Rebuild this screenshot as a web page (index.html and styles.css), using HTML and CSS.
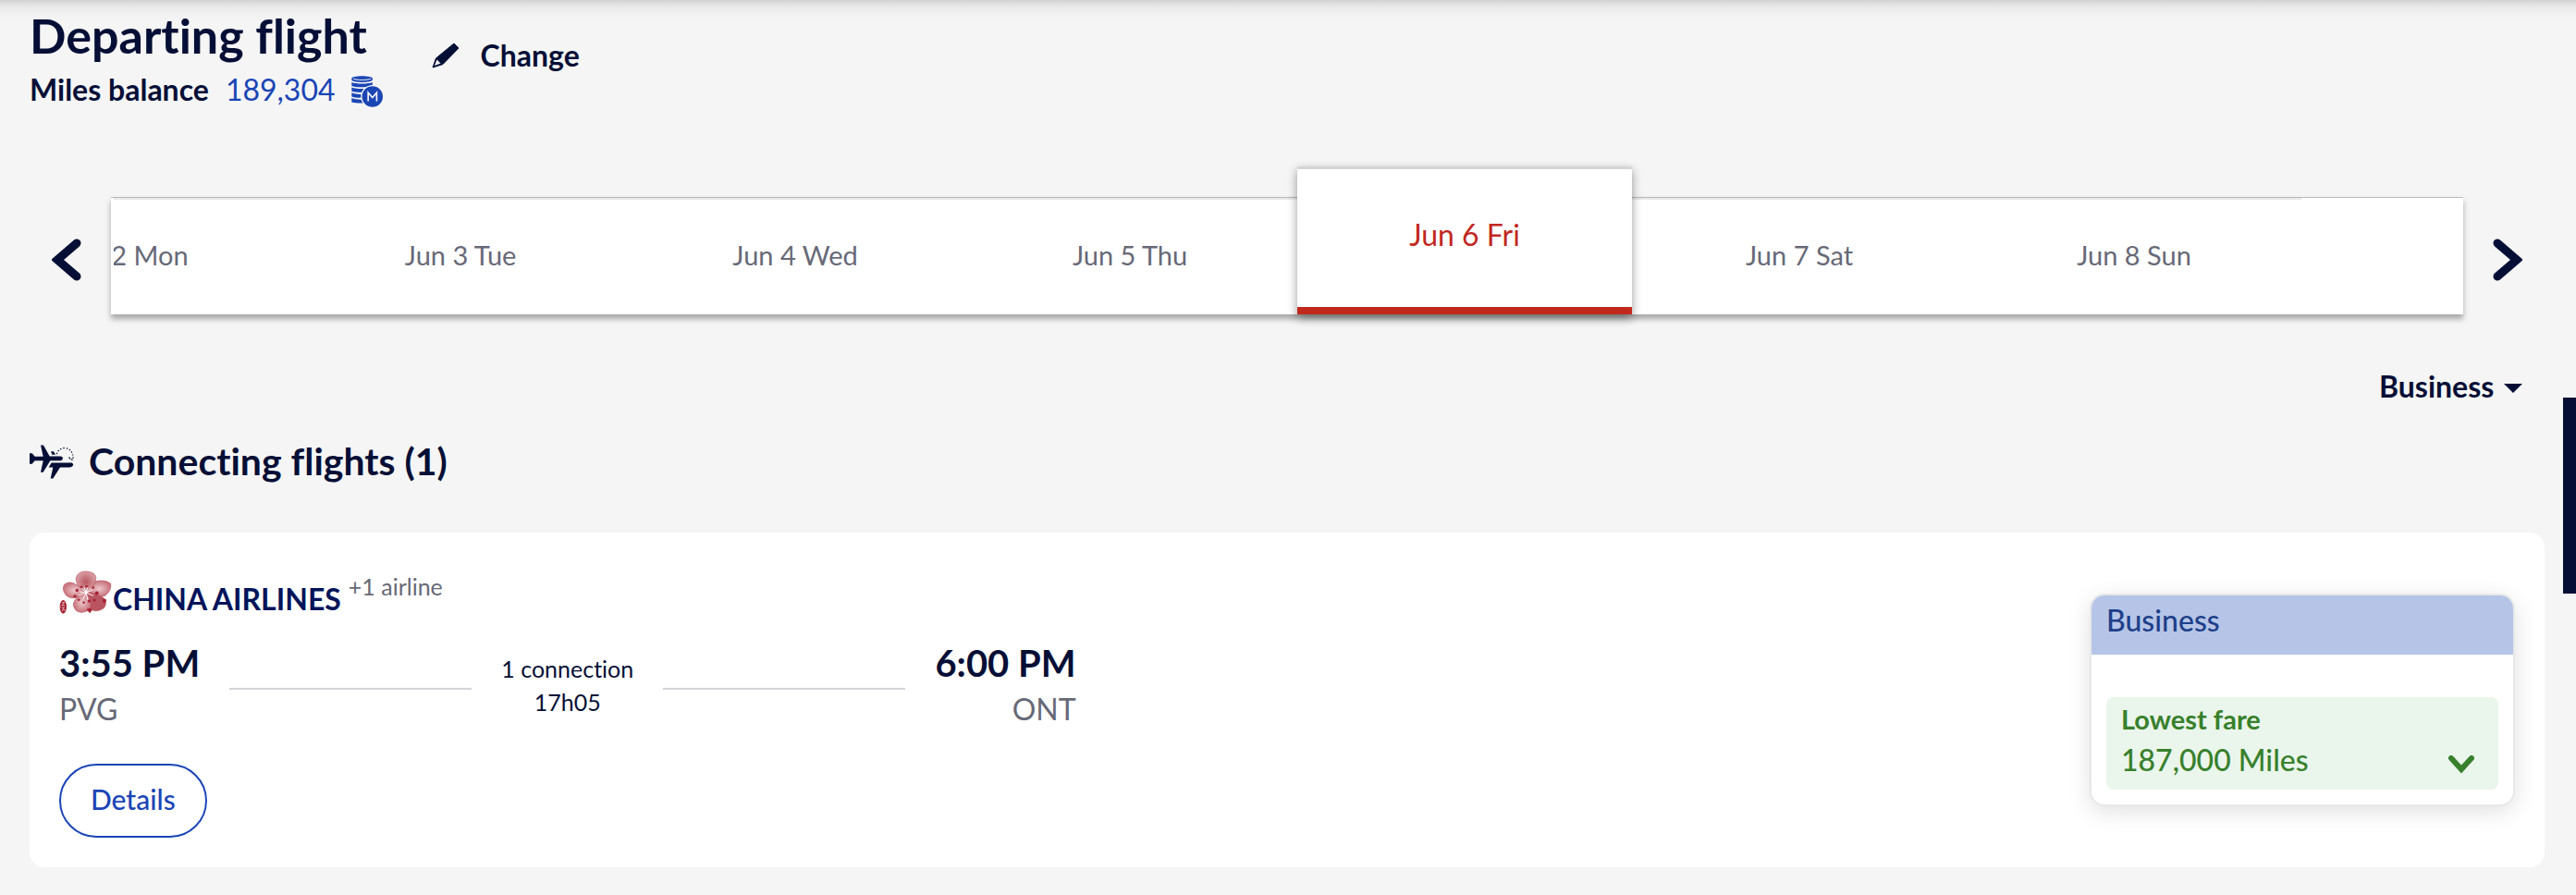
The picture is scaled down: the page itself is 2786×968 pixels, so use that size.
FILE: index.html
```html
<!DOCTYPE html>
<html lang="en">
<head>
<meta charset="utf-8">
<title>Departing flight</title>
<link rel="stylesheet" href="styles.css">
</head>
<body>
<main class="page">
  <header class="head">
    <div class="head-info">
      <h1 class="title">Departing flight</h1>
      <p class="balance">
        <strong class="balance-label">Miles balance</strong>
        <span class="balance-value">189,304</span>
        <svg class="coins" viewBox="56 42 106 104" aria-hidden="true">
          <g fill="#1a45b5">
            <path d="M57 49C57 45 72 42 91 42S125 45 125 49V55C125 59 110 62 91 62S57 59 57 55Z"/>
            <path d="M57 62C70 68 112 68 125 62V72C112 80 70 80 57 74Z"/>
            <path d="M57 79C70 85 106 85 125 79V89C112 96 70 98 57 91Z"/>
            <path d="M57 96C70 102 90 102 100 100V112C85 114 66 113 57 109Z"/>
            <path d="M57 114C70 120 90 120 100 118V130C85 131 66 130 57 127Z"/>
          </g>
          <path d="M62 50C72 56 110 56 120 50" fill="none" stroke="#f5f5f5" stroke-width="3"/>
          <circle cx="125" cy="109" r="36" fill="#1a45b5" stroke="#f5f5f5" stroke-width="4"/>
          <path d="M111 124V96L125 112L139 96V124" fill="none" stroke="#f5f5f5" stroke-width="5"/>
        </svg>
      </p>
    </div>
    <button class="change" type="button">
      <svg class="pencil" viewBox="0 0 30 28" aria-hidden="true">
        <path d="M24 1L29 6L12 23.500L1 27L4.500 17Z" fill="#050f36" stroke="#050f36" stroke-linejoin="round"/>
        <path d="M5.500 18.500L9.500 22.500L3 25Z" fill="#f5f5f5"/>
      </svg>
      Change
    </button>
  </header>

  <nav class="calendar" aria-label="Departure dates">
    <button class="arrow" type="button" aria-label="Previous dates">
      <svg class="arrow-icon" viewBox="0 0 32 46" aria-hidden="true"><path d="M27 5L6 23L27 41"/></svg>
    </button>
    <div class="strip">
      <div class="dates">
        <button class="date" type="button">Jun 2 Mon</button>
        <button class="date" type="button">Jun 3 Tue</button>
        <button class="date" type="button">Jun 4 Wed</button>
        <button class="date" type="button">Jun 5 Thu</button>
        <button class="date date-active" type="button" aria-current="date">Jun 6 Fri</button>
        <button class="date" type="button">Jun 7 Sat</button>
        <button class="date" type="button">Jun 8 Sun</button>
      </div>
    </div>
    <button class="arrow" type="button" aria-label="Next dates">
      <svg class="arrow-icon" viewBox="0 0 32 46" aria-hidden="true"><path d="M5 5L26 23L5 41"/></svg>
    </button>
  </nav>

  <div class="filter">
    <select class="cabin" aria-label="Cabin">
      <option>Business</option>
    </select>
    <svg class="caret" viewBox="0 0 20 10" aria-hidden="true"><path d="M0 0H20L10 10Z" fill="#050f36"/></svg>
  </div>

  <h2 class="subtitle">
    <svg class="planes" viewBox="36 32 144 110" aria-hidden="true">
      <g fill="#050f36">
        <path d="M36 59H44L53 70H80L72 33H81L101 69H137Q144 70 144 76T137 83H103L80 121H72L80 83H53L44 94H36Z"/>
        <path d="M107 90H172Q179 92 177 99Q174 104 167 105H135L112 141H104L112 105H98Z"/>
        <path d="M105 53H114L120 64H109Z"/>
      </g>
      <path d="M124 62Q130 43 150 42Q172 44 176 66" fill="none" stroke="#050f36" stroke-width="4" stroke-dasharray="4 6"/>
      <path d="M164 72Q168 80 175 79L178 71" fill="none" stroke="#050f36" stroke-width="4" stroke-dasharray="6 3"/>
    </svg>
    Connecting flights (1)
  </h2>

  <article class="flight">
    <section class="itinerary">
      <div class="airline">
        <svg class="plum" viewBox="41 49 170 142" aria-hidden="true">
          <defs>
            <radialGradient id="dark"><stop offset="0" stop-color="#b95862"/><stop offset="1" stop-color="#d99da3"/></radialGradient>
            <radialGradient id="light"><stop offset="0" stop-color="#ecc9cd"/><stop offset="1" stop-color="#c9727b"/></radialGradient>
          </defs>
          <g stroke="#b6525c" stroke-width="2">
            <path d="M128 121Q86 152 62 130Q46 108 58 94Q74 82 94 94Q114 102 128 121Z" fill="url(#light)"/>
            <path d="M132 120Q136 96 154 86Q188 76 208 92Q212 114 190 131Q162 144 132 120Z" fill="url(#light)"/>
            <path d="M128 121Q154 120 184 138Q200 154 186 172Q162 188 143 176Q126 152 128 121Z" fill="#b95560"/>
            <path d="M128 121Q94 132 86 158Q88 184 112 186Q142 184 144 164Q142 138 128 121Z" fill="url(#light)"/>
            <path d="M128 121Q92 98 95 74Q100 52 128 52Q158 54 160 72Q160 100 128 121Z" fill="url(#dark)"/>
          </g>
          <g stroke="#fff" stroke-width="3" stroke-linecap="round">
            <path d="M128 122L112 107M128 122L133 103M128 122L148 113M128 122L151 131M128 122L133 144M128 122L118 142M128 122L104 130M128 122L108 119M128 122L122 105M128 122L144 106"/>
          </g>
          <g fill="#a82233">
            <circle cx="113" cy="103" r="4"/><circle cx="130" cy="101" r="4"/><circle cx="151" cy="105" r="4"/><circle cx="98" cy="114" r="5"/>
            <circle cx="163" cy="123" r="6"/><circle cx="91" cy="133" r="5"/><circle cx="104" cy="145" r="4"/><circle cx="120" cy="154" r="4"/>
            <circle cx="138" cy="149" r="5"/><circle cx="155" cy="146" r="5"/>
            <path d="M184 140L195 145L190 156L181 151Z"/><path d="M129 176L140 171L148 178L140 189Z"/>
            <ellipse cx="53" cy="168" rx="11" ry="22"/>
          </g>
          <path d="M50 154L57 153L49 163H58M48 172L58 169M50 182L54 174L59 181M43 167H46" fill="none" stroke="#fff" stroke-width="2"/>
        </svg>
        <span class="airline-name">CHINA AIRLINES</span>
        <span class="airline-more">+1 airline</span>
      </div>
      <div class="journey">
        <div class="stop">
          <div class="time">3:55 PM</div>
          <div class="airport">PVG</div>
        </div>
        <div class="rule"></div>
        <div class="connection">1 connection<br>17h05</div>
        <div class="rule"></div>
        <div class="stop stop-end">
          <div class="time">6:00 PM</div>
          <div class="airport">ONT</div>
        </div>
      </div>
      <button class="details" type="button">Details</button>
    </section>
    <section class="fare">
      <h3 class="fare-head">Business</h3>
      <button class="fare-option" type="button">
        <span class="fare-text">
          <span class="fare-label">Lowest fare</span>
          <span class="fare-price">187,000 Miles</span>
        </span>
        <svg class="chevron" viewBox="0 0 28 20" aria-hidden="true"><path d="M3 3L14 15L25 3"/></svg>
      </button>
    </section>
  </article>
</main>
<button class="side-tab" type="button" aria-label="Feedback"></button>
</body>
</html>
```
FILE: styles.css
```css
* {
  box-sizing: border-box;
}

body {
  margin: 0;
  min-height: 100vh;
  background: linear-gradient(#d2d2d2, #e6e6e6 6px, #f1f1f1 14px, #f5f5f5 24px) #f5f5f5;
  color: #050f36;
  font-family: Lato, sans-serif;
  font-size: 32px;
  line-height: 40px;
  font-variant-ligatures: none;
}

button,
select {
  margin: 0;
  padding: 0;
  border: 0;
  background: none;
  color: inherit;
  font: inherit;
  font-variant-ligatures: none;
  cursor: pointer;
}

h1,
h2,
h3,
p {
  margin: 0;
}

svg {
  display: block;
  flex: none;
}

.page {
  padding: 12px 34px 30px 32px;
}

.head {
  display: flex;
  align-items: flex-start;
  gap: 52px;
}

.title {
  font-size: 52px;
  line-height: 52px;
  font-weight: 700;
}

.balance {
  display: flex;
  align-items: center;
  margin-top: 13px;
}

.balance-label {
  font-weight: 700;
}

.balance-value {
  margin: 0 17px 0 18px;
  color: #1a45b5;
}

.coins {
  width: 35px;
  height: 35px;
  margin-top: 5px;
}

.change {
  display: flex;
  align-items: center;
  gap: 23px;
  margin-top: 28px;
  font-weight: 700;
}

.pencil {
  width: 30px;
  height: 28px;
}

.calendar {
  display: flex;
  align-items: center;
  margin-top: 96px;
}

.arrow {
  flex: none;
  display: flex;
  justify-content: flex-end;
  width: 56px;
  margin: 8px 32px 0 0;
}

.strip + .arrow {
  justify-content: flex-start;
  margin: 8px 0 0 32px;
}

.arrow-icon {
  width: 32px;
  height: 46px;
  fill: none;
  stroke: #050f36;
  stroke-width: 9;
  stroke-linecap: round;
}

.strip {
  flex: 1;
  min-width: 0;
  padding: 0 175px 0 3px;
  border-top: 1px solid #bbb;
  background: #fff;
  box-shadow: 0 5px 6px rgba(0, 0, 0, 0.32);
}

.dates {
  display: flex;
  justify-content: flex-end;
  overflow-x: clip;
}

.date {
  flex: 0 0 15.3%;
  height: 126px;
  padding-bottom: 4px;
  border-top: 2px solid #e8e8e8;
  color: #676977;
  font-size: 29px;
}

.date-active {
  position: relative;
  height: 160px;
  margin-top: -34px;
  padding-bottom: 8px;
  border-top: 3px solid #d6d6d6;
  border-bottom: 8px solid #c1281e;
  background: #fff;
  box-shadow: 0 4px 10px rgba(0, 0, 0, 0.4);
  color: #c1281e;
  font-size: 32px;
}

.filter {
  display: flex;
  align-items: center;
  justify-content: flex-end;
  gap: 10px;
  margin-top: 58px;
  padding-right: 24px;
}

.cabin {
  appearance: none;
  font-weight: 700;
}

.caret {
  width: 20px;
  height: 10px;
  margin-top: 4px;
}

.subtitle {
  display: flex;
  align-items: center;
  gap: 16px;
  margin-top: 37px;
  font-size: 41px;
  line-height: 48px;
  font-weight: 700;
}

.planes {
  width: 48px;
  height: 37px;
}

.flight {
  display: flex;
  align-items: center;
  justify-content: space-between;
  margin-top: 53px;
  padding: 32px;
  border-radius: 16px;
  background: #fff;
}

.itinerary {
  width: 41.4%;
}

.airline {
  display: flex;
  align-items: flex-end;
  height: 56px;
}

.plum {
  width: 57px;
  height: 47px;
}

.airline-name {
  margin-left: 1px;
  color: #00145a;
  font-size: 32px;
  line-height: 32px;
  font-weight: 700;
}

.airline-more {
  align-self: center;
  margin: 0 0 4px 8px;
  color: #676977;
  font-size: 25px;
  line-height: 32px;
}

.journey {
  display: flex;
  align-items: center;
  gap: 32px;
  margin-top: 31px;
}

.time {
  font-size: 40px;
  line-height: 44px;
  font-weight: 700;
  white-space: nowrap;
}

.airport {
  margin-top: 8px;
  color: #676977;
}

.stop-end {
  text-align: right;
}

.rule {
  flex: 1;
  height: 2px;
  margin-top: 8px;
  background: #d3d3d8;
}

.connection {
  font-size: 25px;
  line-height: 36px;
  text-align: center;
}

.details {
  height: 80px;
  margin-top: 39px;
  padding: 0 32px 4px;
  border: 2px solid #1a45b5;
  border-radius: 40px;
  color: #1a45b5;
  font-family: "Lato Medium", Lato, sans-serif;
  font-size: 30px;
  font-weight: 500;
}

.fare {
  width: 460px;
  border: 2px solid #e8e8e8;
  border-radius: 16px;
  background: #fff;
  box-shadow: 0 6px 24px rgba(0, 0, 0, 0.12);
  overflow: hidden;
}

.fare-head {
  height: 64px;
  padding: 7px 16px;
  background: #b6c5e7;
  color: #1e3f89;
  font-family: "Lato Medium", Lato, sans-serif;
  font-size: 32px;
  font-weight: 500;
}

.fare-option {
  display: flex;
  align-items: flex-end;
  justify-content: space-between;
  width: calc(100% - 32px);
  height: 100px;
  margin: 46px 16px 16px;
  padding: 0 26px 12px 16px;
  border-radius: 8px;
  background: #eaf5eb;
  color: #38802c;
  text-align: left;
}

.fare-text {
  display: flex;
  flex-direction: column;
  gap: 6px;
}

.fare-label {
  font-size: 29px;
  line-height: 36px;
  font-weight: 700;
}

.fare-price {
  font-family: "Lato Medium", Lato, sans-serif;
  font-weight: 500;
}

.chevron {
  width: 28px;
  height: 20px;
  margin-bottom: 5px;
  fill: none;
  stroke: #38802c;
  stroke-width: 6;
  stroke-linecap: round;
}

.side-tab {
  position: absolute;
  top: 430px;
  right: 0;
  width: 14px;
  height: 212px;
  background: #050f36;
}
```
